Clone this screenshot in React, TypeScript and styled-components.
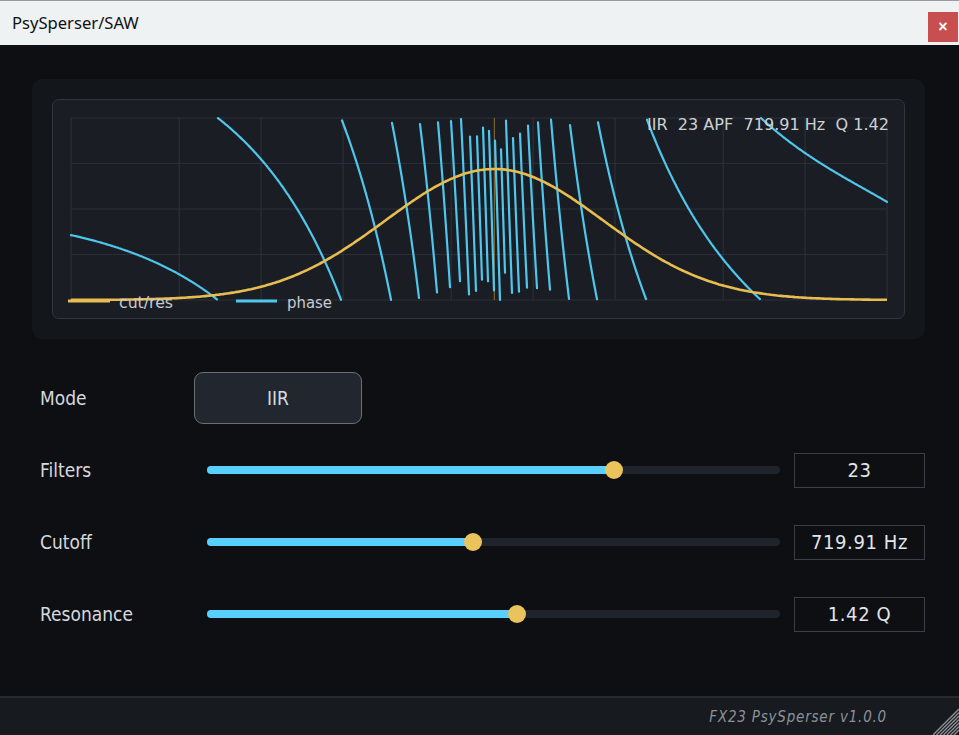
import React from 'react';
import styled, { createGlobalStyle } from 'styled-components';

const UI_FONT = '"DejaVu Sans Condensed", "DejaVu Sans", sans-serif';

const GlobalStyle = createGlobalStyle`
	html, body {
		margin: 0;
		padding: 0;
		background: #0d0f13;
	}
	body {
		font-family: ${UI_FONT};
		overflow: hidden;
	}
`;

const Window = styled.div`
	display: flex;
	flex-direction: column;
	width: 959px;
	height: 735px;
	background: #0d0f13;
`;

const TitleBar = styled.header`
	display: flex;
	justify-content: space-between;
	height: 44px;
	border-top: 1px solid #9b9b9b;
	background: #eef2f3;
	padding-left: 12px;
`;

const Title = styled.span`
	align-self: center;
	margin-top: -1px;
	font-family: 'Noto Sans', 'Open Sans', sans-serif;
	font-size: 16.6px;
	color: #111;
`;

const CloseButton = styled.button`
	align-self: flex-start;
	width: 30px;
	height: 30px;
	margin: 11px 1px 0 0;
	padding: 0;
	border: none;
	background: #c74f50;
	color: #fff;
	font-family: 'Liberation Sans', sans-serif;
	font-size: 16px;
	font-weight: 700;
	line-height: 30px;
`;

const Content = styled.main`
	flex: 1;
	display: flex;
	flex-direction: column;
	padding: 34px 34px 0 32px;
`;

const PlotPanel = styled.section`
	padding: 20px;
	border-radius: 10px;
	background: #13161b;
`;

const PlotFrame = styled.div`
	height: 220px;
	box-sizing: border-box;
	border: 1px solid #30353e;
	border-radius: 7px;
	background: #1a1e24;
	overflow: hidden;

	svg {
		display: block;
	}
`;

const Controls = styled.section`
	display: grid;
	grid-template-columns: 154px 600px 131px;
	grid-auto-rows: 72px;
	align-items: center;
	margin-top: 23px;
	padding-left: 8px;
`;

const Label = styled.span`
	font-size: 19px;
	color: #d6d9de;
`;

const ModeButton = styled.button`
	width: 168px;
	height: 52px;
	box-sizing: border-box;
	border: 1.5px solid #6b7078;
	border-radius: 9px;
	background: #22262e;
	color: #d8dbe0;
	font-family: ${UI_FONT};
	font-size: 19px;
`;

const Track = styled.div`
	position: relative;
	height: 8px;
	margin: 0 14px 0 13px;
	border-radius: 4px;
	background: #1f242c;
`;

const Fill = styled.div`
	height: 100%;
	border-radius: 4px;
	background: #58d0fd;
`;

const Knob = styled.div`
	position: absolute;
	top: 50%;
	width: 18px;
	height: 18px;
	border-radius: 50%;
	background: #ebc35c;
	transform: translate(-50%, -50%);
`;

const ValueBox = styled.div`
	display: flex;
	align-items: center;
	justify-content: center;
	height: 35px;
	box-sizing: border-box;
	border: 1.5px solid #3b4048;
	font-size: 20px;
	letter-spacing: 0.6px;
	color: #e2e5e9;
`;

const Footer = styled.footer`
	position: relative;
	display: flex;
	align-items: center;
	justify-content: flex-end;
	height: 37px;
	padding-right: 72px;
	border-top: 2px solid #262a31;
	background: #171a1f;
`;

const FooterText = styled.span`
	font-size: 15px;
	font-style: italic;
	letter-spacing: 0.8px;
	color: #8c9199;
`;

const Grip = styled.svg`
	position: absolute;
	right: 0;
	bottom: 0;
`;

// plot geometry, in frame pixels
const GX0 = 19;
const GX1 = 835;
const GY0 = 19;
const GY1 = 201;
const GW = GX1 - GX0;
const GH = GY1 - GY0;
const DECADE = GW / 3;

const FS = 44100;
const CUTOFF = 719.91;
const Q = 1.42;
const STAGES = 23;

const freqToX = (f: number) => GX0 + DECADE * Math.log10(f / 20);

const GRID_FREQS = [20, 50, 100, 200, 500, 1000, 2000, 5000, 10000, 20000];
const GRID_ROWS = [0, 1, 2, 3, 4].map((i) => GY0 + (i * GH) / 4);

const phaseSegments = (): string[] => {
	const t0 = Math.tan((Math.PI * CUTOFF) / FS);
	const segments: string[] = [];
	let current: string[] = [];
	let prevY = -Infinity;
	for (let x = GX0; x <= GX1; x += 1) {
		const f = 20 * Math.pow(10, (x - GX0) / DECADE);
		const r = Math.tan((Math.PI * f) / FS) / t0;
		const phi = -2 * STAGES * Math.atan2(r / Q, 1 - r * r);
		const tau = 2 * Math.PI;
		const wrapped = ((((phi + Math.PI) % tau) + tau) % tau) - Math.PI;
		const y = GY0 + (0.5 - wrapped / tau) * GH;
		if (y < prevY) {
			if (current.length > 1) segments.push(current.join(' '));
			current = [];
		}
		current.push(`${x},${y.toFixed(1)}`);
		prevY = y;
	}
	if (current.length > 1) segments.push(current.join(' '));
	return segments;
};

const responseCurve = (): string => {
	const cx = freqToX(CUTOFF);
	const sigma = 109;
	const pts: string[] = [];
	for (let x = GX0; x <= GX1; x += 2) {
		const y = GY1 - 131 * Math.exp(-((x - cx) ** 2) / (2 * sigma * sigma));
		pts.push(`${x},${y.toFixed(1)}`);
	}
	return pts.join(' ');
};

const PHASE = phaseSegments();
const RESPONSE = responseCurve();

const PhasePlot = () => {
	const cx = freqToX(CUTOFF);
	return (
		<svg width={851} height={218} viewBox="1 1 851 218">
			<g stroke="#2a2f37" strokeWidth={1.2}>
				{GRID_FREQS.map((f) => (
					<line key={f} x1={freqToX(f)} x2={freqToX(f)} y1={GY0} y2={GY1} />
				))}
				{GRID_ROWS.map((y) => (
					<line key={y} x1={GX0} x2={GX1} y1={y} y2={y} />
				))}
			</g>
			<line x1={cx} x2={cx} y1={GY0} y2={GY1} stroke="#8f7132" strokeWidth={1} />
			<g fill="none" stroke="#4fc6ec" strokeWidth={2.2} strokeLinecap="round">
				{PHASE.map((pts, i) => (
					<polyline key={i} points={pts} />
				))}
			</g>
			<polyline points={RESPONSE} fill="none" stroke="#e8bd50" strokeWidth={2.6} />
			<text
				x={595}
				y={31}
				textLength={242}
				lengthAdjust="spacingAndGlyphs"
				fill="#cdd0d5"
				fontSize={15}
				fontFamily={UI_FONT}
				style={{ whiteSpace: 'pre' }}
			>
				{'IIR  23 APF  719.91 Hz  Q 1.42'}
			</text>
			<line x1={16} x2={58} y1={202} y2={202} stroke="#e8bd50" strokeWidth={3} />
			<text x={67} y={209} textLength={54} lengthAdjust="spacingAndGlyphs" fill="#c8ccd2" fontSize={16} fontFamily={UI_FONT}>
				cut/res
			</text>
			<line x1={184} x2={225} y1={202} y2={202} stroke="#4fc6ec" strokeWidth={3} />
			<text x={235} y={209} textLength={45} lengthAdjust="spacingAndGlyphs" fill="#c8ccd2" fontSize={16} fontFamily={UI_FONT}>
				phase
			</text>
		</svg>
	);
};

type SliderRowProps = {
	label: string;
	fraction: number;
	value: string;
};

const SliderRow = ({ label, fraction, value }: SliderRowProps) => (
	<>
		<Label>{label}</Label>
		<Track>
			<Fill style={{ width: `${fraction * 100}%` }} />
			<Knob style={{ left: `${fraction * 100}%` }} />
		</Track>
		<ValueBox>{value}</ValueBox>
	</>
);

const SLIDERS: SliderRowProps[] = [
	{ label: 'Filters', fraction: 22 / 31, value: '23' },
	{ label: 'Cutoff', fraction: 0.464, value: '719.91 Hz' },
	{ label: 'Resonance', fraction: 0.541, value: '1.42 Q' },
];

const App = () => (
	<Window>
		<GlobalStyle />
		<TitleBar>
			<Title>PsySperser/SAW</Title>
			<CloseButton>×</CloseButton>
		</TitleBar>
		<Content>
			<PlotPanel>
				<PlotFrame>
					<PhasePlot />
				</PlotFrame>
			</PlotPanel>
			<Controls>
				<Label>Mode</Label>
				<div>
					<ModeButton>IIR</ModeButton>
				</div>
				<div />
				{SLIDERS.map((s) => (
					<SliderRow key={s.label} {...s} />
				))}
			</Controls>
		</Content>
		<Footer>
			<FooterText>FX23 PsySperser v1.0.0</FooterText>
			<Grip width={26} height={27} viewBox="0 0 26 27">
				<g stroke="#8e9299" strokeWidth={1.3}>
					{[0, 3.5, 7, 10.5, 14, 17.5, 21].map((k) => (
						<line key={k} x1={k} y1={27} x2={26} y2={k + 1} />
					))}
				</g>
			</Grip>
		</Footer>
	</Window>
);

export default App;
